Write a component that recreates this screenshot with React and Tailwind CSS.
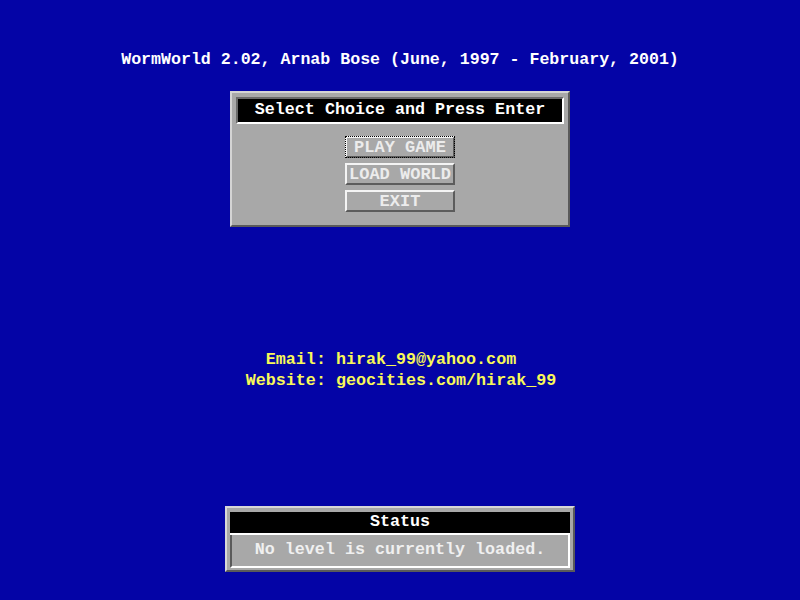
import React from "react";

const mono = { fontFamily: '"Liberation Mono", "DejaVu Sans Mono", monospace' };

function MenuButton({ label, focused }) {
  return (
    <div className="border-2 border-t-[#f4f4f4] border-l-[#f4f4f4] border-b-[#5c5c5c] border-r-[#5c5c5c] w-[110px] h-[22px] flex items-center justify-center">
      <div
        className={
          "w-full h-full flex items-center justify-center text-[17px] font-bold leading-none text-[#ececec] " +
          (focused ? "outline-1 outline-dotted outline-black outline-offset-[1px]" : "")
        }
      >
        {label}
      </div>
    </div>
  );
}

export default function App() {
  return (
    <div className="w-[800px] h-[600px] bg-[#0404a6] flex flex-col items-center overflow-hidden" style={mono}>
      <div className="mt-[50px] text-white font-bold text-[16.6px] leading-[20px]">
        WormWorld 2.02, Arnab Bose (June, 1997 - February, 2001)
      </div>

      {/* main menu dialog */}
      <div className="mt-[21px] w-[340px] h-[136px] bg-[#a8a8a8] border-2 border-t-[#d4d4d4] border-l-[#d4d4d4] border-b-[#5a5a5a] border-r-[#5a5a5a] p-[4px] flex flex-col">
        <div className="h-[27px] bg-black border-2 border-t-[#6a6a6a] border-l-[#6a6a6a] border-b-white border-r-white flex items-center justify-center text-white font-bold text-[16.7px] leading-none">
          Select Choice and Press Enter
        </div>
        <div className="flex flex-col items-center gap-[5px] mt-[12px]">
          <MenuButton label="PLAY GAME" focused />
          <MenuButton label="LOAD WORLD" />
          <MenuButton label="EXIT" />
        </div>
      </div>

      {/* contact */}
      <div className="mt-[123px] grid grid-cols-[auto_auto] gap-x-[10px] gap-y-[1px] text-[#f8f858] font-bold text-[16.7px] leading-[20px] ml-[2px]">
        <div className="text-right">Email:</div>
        <div>hirak_99@yahoo.com</div>
        <div className="text-right">Website:</div>
        <div>geocities.com/hirak_99</div>
      </div>

      {/* status box */}
      <div className="mt-[115px] w-[350px] h-[66px] bg-[#a8a8a8] border-2 border-t-[#d8d8d8] border-l-[#d8d8d8] border-b-[#5a5a5a] border-r-[#5a5a5a] pt-[4px] px-[3px] pb-[2px] flex flex-col">
        <div className="h-[23px] bg-black border-b-2 border-white flex items-center justify-center text-white font-bold text-[16.7px] leading-none">
          Status
        </div>
        <div className="flex-1 border-l-2 border-l-[#5a5a5a] border-r-2 border-r-white border-b-2 border-b-white flex items-center justify-center text-[#f0f0f0] font-bold text-[16.7px] leading-none">
          No level is currently loaded.
        </div>
      </div>
    </div>
  );
}
